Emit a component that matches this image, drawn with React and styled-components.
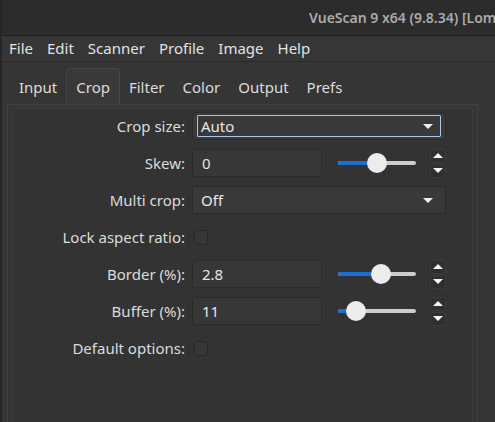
import React from 'react'
import styled, { createGlobalStyle, css } from 'styled-components'

const GlobalStyle = createGlobalStyle`
  html, body {
    margin: 0;
    padding: 0;
    background: #353535;
  }
  body {
    font-family: 'Noto Sans', 'Open Sans', sans-serif;
    font-size: 15px;
    color: #dcdcdc;
  }
`

const menus = ['File', 'Edit', 'Scanner', 'Profile', 'Image', 'Help']
const tabs = ['Input', 'Crop', 'Filter', 'Color', 'Output', 'Prefs']

const Window = styled.div`
  width: 495px;
  height: 422px;
  display: flex;
  flex-direction: column;
  overflow: hidden;
  background: #353535;
  border-left: 2px solid #262626;
  box-sizing: border-box;
`

const TitleBar = styled.div`
  height: 35px;
  flex-shrink: 0;
  display: flex;
  align-items: center;
  padding-left: 307px;
  background: #2c2c2c;
  border-bottom: 1px solid #1d1d1d;
  color: #ababab;
  font-size: 14px;
  font-weight: 600;
  white-space: nowrap;
  overflow: hidden;
`

const MenuBar = styled.div`
  height: 25px;
  flex-shrink: 0;
  display: flex;
  align-items: center;
  gap: 14px;
  padding-left: 7px;
  background: #363636;
  border-bottom: 1px solid #2a2a2a;
  color: #e2e2e2;
`

const MenuItem = styled.span`
  line-height: 25px;
`

const TabBar = styled.div`
  display: flex;
  align-items: flex-end;
  height: 42px;
  flex-shrink: 0;
  padding-left: 8px;
`

const Tab = styled.div`
  height: 36px;
  box-sizing: border-box;
  display: flex;
  align-items: center;
  padding: 0 8px;
  color: #dcdcdc;
  border: 1px solid transparent;
  border-bottom: none;
  border-radius: 4px 4px 0 0;
  ${p => p.active && css`
    background: #393939;
    border-color: #464646;
    padding: 0 9px;
  `}
`

const Pane = styled.div`
  flex: 1;
  margin-left: 5px;
  width: 471px;
  box-sizing: border-box;
  border: 1px solid #414141;
  border-bottom: none;
  background: #353535;
  padding: 3px 4px 0;
  display: flex;
`

const Scroll = styled.div`
  flex: 1;
  border: 1px solid #3d3d3d;
  border-bottom: none;
  background: #333333;
  padding-top: 3px;
`

const Form = styled.div`
  display: grid;
  grid-template-columns: 172px 254px;
  column-gap: 7px;
  row-gap: 9px;
  grid-auto-rows: 28px;
`

const Label = styled.div`
  display: flex;
  align-items: center;
  justify-content: flex-end;
  white-space: nowrap;
  color: #dcdcdc;
`

const Field = styled.div`
  display: flex;
  align-items: center;
`

const Combo = styled.div`
  position: relative;
  flex: 1;
  height: 28px;
  box-sizing: border-box;
  display: flex;
  align-items: center;
  padding: 0 8px;
  background: #393939;
  border: 1px solid #2b2b2b;
  border-radius: 3px;
  color: #e6e6e6;
  ${p => p.focused && css`
    &::before {
      content: '';
      position: absolute;
      left: 4px;
      right: 4px;
      top: 2px;
      bottom: 2px;
      border: 1px solid #a8c6e8;
      border-radius: 1px;
    }
  `}
`

const ComboText = styled.span`
  flex: 1;
`

const Caret = styled.span`
  width: 0;
  height: 0;
  margin-right: 4px;
  border-left: 5px solid transparent;
  border-right: 5px solid transparent;
  border-top: 5px solid #f0f0f0;
`

const TextBox = styled.div`
  width: 130px;
  height: 28px;
  box-sizing: border-box;
  display: flex;
  align-items: center;
  padding: 0 9px;
  background: #373737;
  border: 1px solid #2b2b2b;
  border-radius: 3px;
  color: #e6e6e6;
`

const SliderWrap = styled.div`
  position: relative;
  width: 78px;
  height: 20px;
  margin-left: 16px;
`

const Track = styled.div`
  position: absolute;
  left: 0;
  right: 0;
  top: 8px;
  height: 4px;
  border-radius: 2px;
  background: #cdcdcd;
`

const Fill = styled.div`
  position: absolute;
  left: 0;
  top: 8px;
  height: 4px;
  border-radius: 2px;
  background: #1a6fd6;
`

const Knob = styled.div`
  position: absolute;
  top: 0;
  width: 20px;
  height: 20px;
  margin-left: -10px;
  border-radius: 50%;
  background: #ececec;
`

const Spin = styled.div`
  display: flex;
  flex-direction: column;
  margin-left: 14px;
  width: 16px;
  gap: 1px;
`

const SpinButton = styled.div`
  height: 14px;
  box-sizing: border-box;
  display: flex;
  align-items: center;
  justify-content: center;
  background: #2f2f2f;
  border: 1px solid #3b3b3b;
  border-radius: 2px;
`

const Arrow = styled.span`
  width: 0;
  height: 0;
  border-left: 5px solid transparent;
  border-right: 5px solid transparent;
  ${p => p.up
    ? css`border-bottom: 5px solid #f4f4f4;`
    : css`border-top: 5px solid #f4f4f4;`}
`

const Check = styled.div`
  width: 14px;
  height: 15px;
  margin-left: 2px;
  box-sizing: border-box;
  border: 1px solid #282828;
  border-radius: 3px;
  background: #363636;
`

const Slider = ({ at }) => (
  <SliderWrap>
    <Track />
    <Fill style={{ width: at }} />
    <Knob style={{ left: at }} />
  </SliderWrap>
)

const NumberRow = ({ value, at }) => (
  <Field>
    <TextBox>{value}</TextBox>
    <Slider at={at} />
    <Spin>
      <SpinButton><Arrow up /></SpinButton>
      <SpinButton><Arrow /></SpinButton>
    </Spin>
  </Field>
)

const App = () => (
  <Window>
    <GlobalStyle />
    <TitleBar>VueScan 9 x64 (9.8.34) [Lom</TitleBar>
    <MenuBar>
      {menus.map(m => <MenuItem key={m}>{m}</MenuItem>)}
    </MenuBar>
    <TabBar>
      {tabs.map(t => <Tab key={t} active={t === 'Crop'}>{t}</Tab>)}
    </TabBar>
    <Pane>
      <Scroll>
        <Form>
          <Label>Crop size:</Label>
          <Field>
            <Combo focused>
              <ComboText>Auto</ComboText>
              <Caret />
            </Combo>
          </Field>

          <Label>Skew:</Label>
          <NumberRow value='0' at={39} />

          <Label>Multi crop:</Label>
          <Field>
            <Combo>
              <ComboText>Off</ComboText>
              <Caret />
            </Combo>
          </Field>

          <Label>Lock aspect ratio:</Label>
          <Field><Check /></Field>

          <Label>Border (%):</Label>
          <NumberRow value='2.8' at={43} />

          <Label>Buffer (%):</Label>
          <NumberRow value='11' at={18} />

          <Label>Default options:</Label>
          <Field><Check /></Field>
        </Form>
      </Scroll>
    </Pane>
  </Window>
)

export default App
